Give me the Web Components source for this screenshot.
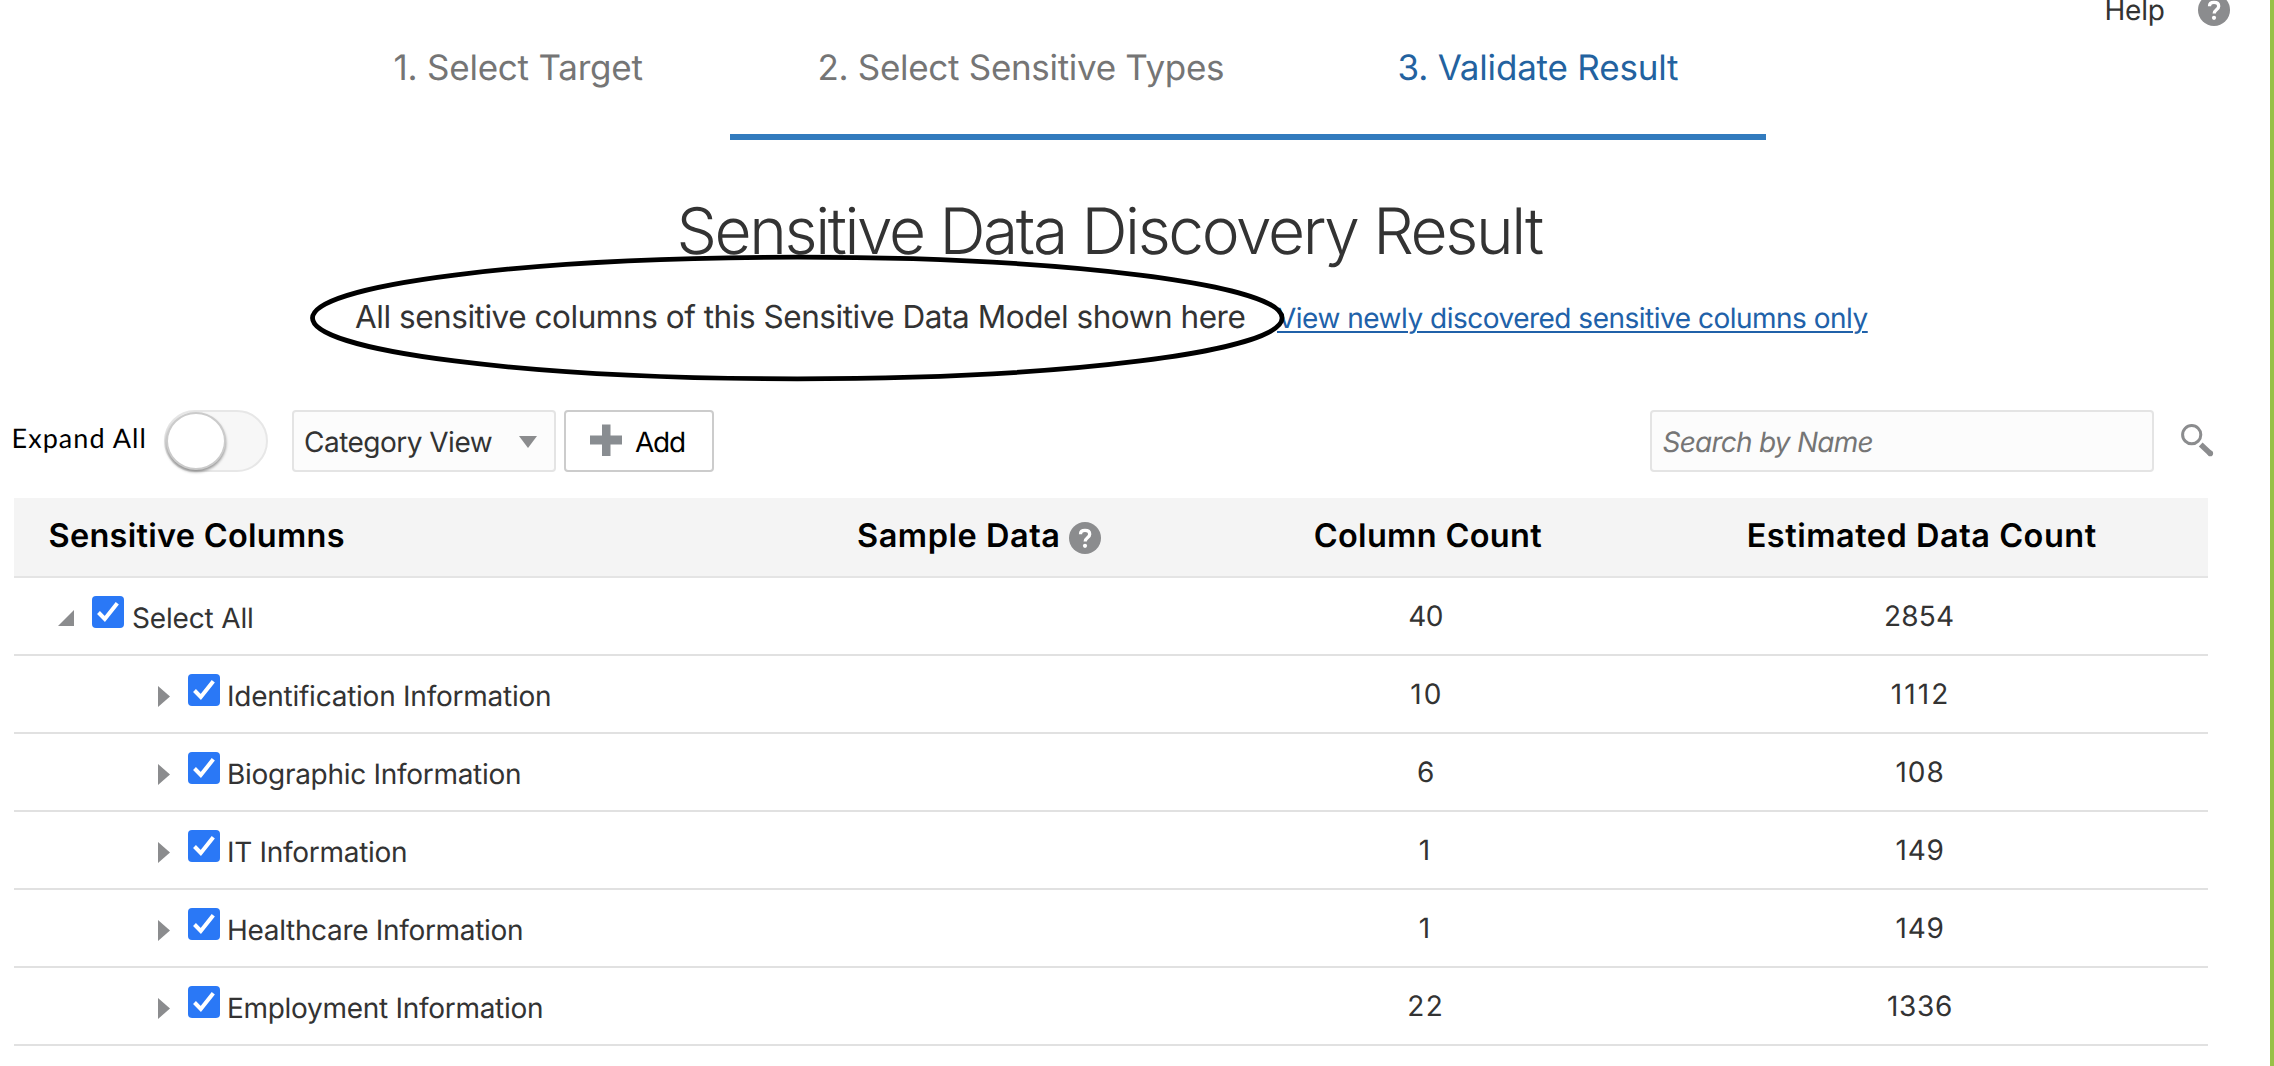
<!DOCTYPE html>
<html lang="en">
<head>
<meta charset="utf-8">
<title>Sensitive Data Discovery Result</title>
<style>
html,body{margin:0;padding:0;background:#fff}
body{width:2274px;height:1066px;overflow:hidden;font-family:Inter,"Liberation Sans",sans-serif;color:#333}
</style>
</head>
<body>
<discovery-page></discovery-page>
<script>
const define = (name, html, setup) => {
  const tpl = document.createElement('template');
  tpl.innerHTML = html;
  customElements.define(name, class extends HTMLElement {
    connectedCallback() {
      if (this.shadowRoot) return;
      this.attachShadow({mode: 'open'}).append(tpl.content.cloneNode(true));
      if (setup) setup(this, this.shadowRoot);
    }
  });
};

/* One line of text whose tracking is tuned so its ink spans the "w" attribute. */
const ctx = document.createElement('canvas').getContext('2d');
define('fit-text', `
<style>
:host{display:block;flex:none;white-space:nowrap;text-rendering:geometricPrecision}
span{display:inline-block;line-height:inherit;vertical-align:top;text-decoration:inherit;text-underline-offset:inherit}
</style><span><slot></slot></span>`, (el, root) => {
  const span = root.querySelector('span'), w = +el.getAttribute('w'), text = el.textContent;
  const cs = getComputedStyle(el);
  ctx.font = `${cs.fontStyle} ${cs.fontWeight} ${cs.fontSize} ${cs.fontFamily}`;
  const m = ctx.measureText(text);
  const adv = span.getBoundingClientRect().width;
  const ink = adv - (m.width - m.actualBoundingBoxRight - m.actualBoundingBoxLeft);
  span.style.letterSpacing = (text.length > 1 ? (w - ink) / (text.length - 1) : 0) + 'px';
  span.style.marginLeft = m.actualBoundingBoxLeft + 'px';
  el.style.width = w + 'px';
});

define('help-icon', `
<style>:host{display:block;flex:none;width:32px;height:32px}svg{display:block}</style>
<svg width="32" height="32" viewBox="0 0 32 32"><circle cx="16" cy="16" r="16" fill="#8b8c8e"/>
<path d="M11.5 12.2C11.5 9.6 13.4 8.4 16 8.4c2.700 0 4.700 1.400 4.700 3.800 0 3.600-4.500 3.500-4.500 7.200" fill="none" stroke="#fff" stroke-width="3.300"/>
<circle cx="16" cy="23.800" r="2.100" fill="#fff"/></svg>`);

define('top-bar', `
<style>
:host{display:flex;height:30px;align-items:flex-start;padding-left:2106.500px;font-size:28px;line-height:20px}
help-icon{margin:-6px 0 0 34.300px}
</style><fit-text w="57.200">Help</fit-text><help-icon></help-icon>`);

define('step-train', `
<style>
:host{display:block;height:110px;font-size:35px;line-height:76px;color:#757575}
.steps{display:flex;height:74px;padding-left:394.500px}
.two{margin-left:177px}.three{margin-left:176.500px;color:#23629f}
.bar{height:6px;width:1036px;margin:30px 0 0 730px;background:#327bbe}
</style>
<div class="steps"><fit-text w="248">1. Select Target</fit-text><fit-text class="two" w="403.500">2. Select Sensitive Types</fit-text><fit-text class="three" w="278.500">3. Validate Result</fit-text></div>
<div class="bar"></div>`);

define('page-title', `
<style>
:host{display:block;padding:30px 0 0 680.500px;height:121px;font-size:64px;font-weight:350;line-height:123px;color:#333}
</style><fit-text w="862.500">Sensitive Data Discovery Result</fit-text>`);

define('result-note', `
<style>
:host{display:flex;position:relative;height:119px;align-items:baseline;padding-left:355px;box-sizing:border-box;font-size:31.500px;line-height:51px}
a{margin-left:32.500px;font-size:28px;color:#2061a9;display:block}
a fit-text{text-decoration:underline 2px;text-underline-offset:3px}
svg{position:absolute;left:300px;top:-46px}
</style>
<fit-text w="889.500">All sensitive columns of this Sensitive Data Model shown here</fit-text>
<a><fit-text w="590.500">View newly discovered sensitive columns only</fit-text></a>
<svg width="1000" height="146"><ellipse cx="497.300" cy="73" rx="484.800" ry="60.800" fill="none" stroke="#000" stroke-width="4.800"/></svg>`);

define('toggle-switch', `
<style>
:host{display:block;flex:none;box-sizing:border-box;width:104px;height:62px;border:2px solid #e7e7e7;border-radius:31px;background:#f7f7f7}
i{display:block;box-sizing:border-box;width:60px;height:58px;border:2px solid #cbcbcb;border-radius:50%;background:#fff;box-shadow:0 2px 3px #0006}
</style><i></i>`);

define('tool-bar', `
<style>
:host{display:flex;height:62px;align-items:flex-start;font-size:28px;line-height:64px}
.exp{font-family:Lato,sans-serif;font-size:27px;line-height:55px;color:#000;margin-left:13.500px}
toggle-switch{margin-left:19.500px}
.box{display:flex;flex:none;box-sizing:border-box;height:62px;line-height:60px;border:2px solid #e4e4e4;border-radius:4px;background:#fcfcfc}
.sel{width:264px;margin-left:24px;padding-left:11px}
.sel svg{margin:24px 0 0 27px}
.add{width:150px;margin-left:8px;border-color:#ccc;background:#fff;color:#000}
.add svg{margin:12px 13px 0 24px}
.find{width:504px;margin-left:936px;padding-left:10.500px;font-style:italic;color:#757575}
.mag{flex:none;margin:14px 0 0 26.700px}
</style>
<fit-text class="exp" w="131">Expand All</fit-text><toggle-switch></toggle-switch>
<div class="box sel"><fit-text w="186.700">Category View</fit-text><svg width="18" height="12"><path d="M0 0h18l-9 12z" fill="#8b8c8e"/></svg></div>
<div class="box add"><svg width="32" height="32"><path d="M12 0.500h8.500V11.500H32V20.500H20.500V32H12V20.500H0V11.500H12z" fill="#898d91"/></svg><fit-text w="49">Add</fit-text></div>
<div class="box find"><fit-text w="210">Search by Name</fit-text></div>
<svg class="mag" width="33" height="33"><circle cx="10.700" cy="10.700" r="9.100" fill="none" stroke="#8b8c8e" stroke-width="3"/><path d="M19.700 20.500L29.300 29.500" stroke="#8b8c8e" stroke-width="5.500"/><circle cx="29.300" cy="29.400" r="2.800" fill="#8b8c8e"/></svg>`);

define('check-box', `
<style>:host{display:block;flex:none;width:32px;height:32px;border-radius:4px;background:#2a78f6}svg{display:block}</style>
<svg width="32" height="32"><path d="M6.500 16.500L12.800 23L25.300 7.300" fill="none" stroke="#fff" stroke-width="4"/></svg>`);

define('table-head', `
<style>
:host{display:grid;grid-template-columns:844px 456.700px 434px 1fr;height:78px;background:#f4f4f4;border-bottom:2px solid #e4e4e4;font-size:32.500px;font-weight:600;line-height:76px;color:#000}
.first{padding-left:35.500px}.s{display:flex}help-icon{margin:24px 0 0 10.700px}
</style>
<div class="first"><fit-text w="294.200">Sensitive Columns</fit-text></div>
<div class="s"><fit-text w="200.300">Sample Data</fit-text><help-icon></help-icon></div>
<div><fit-text w="226.500">Column Count</fit-text></div>
<div><fit-text w="347">Estimated Data Count</fit-text></div>`);

define('tree-row', `
<style>
:host{display:grid;grid-template-columns:1170px 483px 505px;height:76px;border-bottom:2px solid #e1e1e1;font-size:28px;line-height:76px;color:#333}
.name{display:flex;align-items:flex-start;line-height:80px;padding-left:143.700px}
.arrow{flex:none;width:12px;height:21px;margin:30px 18.300px 0 0}
:host([open]) .name{padding-left:44px}
:host([open]) .arrow{width:16px;height:16px;margin:32px 18px 0 0}
check-box{margin:18px 9px 0 0}
.n{display:flex;justify-content:center}
</style>
<div class="name"><svg class="arrow"><path fill="#8b8c8e"/></svg><check-box></check-box><span class="t"></span></div>
<div class="n c"></div><div class="n d"></div>`, (el, root) => {
  root.querySelector('path').setAttribute('d', el.hasAttribute('open') ? 'M16 0V16H0z' : 'M0 0L12 10.500L0 21z');
  const put = (sel, text, w) => {
    const f = document.createElement('fit-text');
    f.setAttribute('w', w); f.textContent = text;
    root.querySelector(sel).append(f);
  };
  const digits = s => [...s].reduce((a, c) => a + (c === '1' ? 13.4 : 17.2), -2);
  put('.t', el.getAttribute('label'), el.getAttribute('w'));
  put('.c', el.getAttribute('columns'), digits(el.getAttribute('columns')));
  put('.d', el.getAttribute('data'), digits(el.getAttribute('data')));
});

define('result-table', `
<style>:host{display:block;width:2194px;margin:26px 0 0 14px}</style>
<table-head></table-head>
<tree-row open label="Select All" w="119" columns="40" data="2854"></tree-row>
<tree-row label="Identification Information" w="321" columns="10" data="1112"></tree-row>
<tree-row label="Biographic Information" w="291" columns="6" data="108"></tree-row>
<tree-row label="IT Information" w="177" columns="1" data="149"></tree-row>
<tree-row label="Healthcare Information" w="293" columns="1" data="149"></tree-row>
<tree-row label="Employment Information" w="313" columns="22" data="1336"></tree-row>`);

define('discovery-page', `
<style>:host{display:block;box-sizing:border-box;width:2274px;height:1066px;overflow:hidden;border-right:4px solid #97c147}</style>
<top-bar></top-bar><step-train></step-train><page-title></page-title><result-note></result-note><tool-bar></tool-bar><result-table></result-table>`);
</script>
</body>
</html>
